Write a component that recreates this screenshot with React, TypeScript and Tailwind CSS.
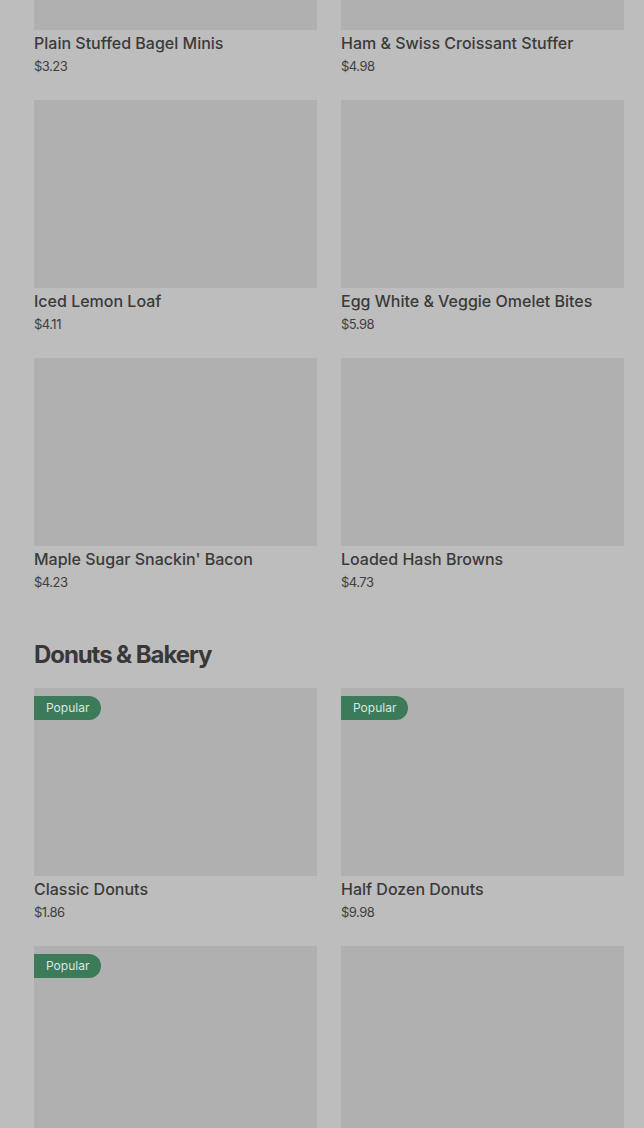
type Item = {
  name: string
  price: string
  popular?: boolean
}

const breakfast: Item[] = [
  { name: 'Plain Stuffed Bagel Minis', price: '$3.23' },
  { name: 'Ham & Swiss Croissant Stuffer', price: '$4.98' },
  { name: 'Iced Lemon Loaf', price: '$4.11' },
  { name: 'Egg White & Veggie Omelet Bites', price: '$5.98' },
  { name: "Maple Sugar Snackin' Bacon", price: '$4.23' },
  { name: 'Loaded Hash Browns', price: '$4.73' },
]

const bakery: Item[] = [
  { name: 'Classic Donuts', price: '$1.86', popular: true },
  { name: 'Half Dozen Donuts', price: '$9.98', popular: true },
  { name: 'Dozen Donuts', price: '$17.48', popular: true },
  { name: 'Munchkins Donut Hole Treats', price: '$4.98' },
]

function ItemCard({ item }: { item: Item }) {
  return (
    <div className="flex flex-col">
      <div className="relative h-[188px] w-full bg-[#b0b0b0]">
        {item.popular && (
          <span className="absolute top-2 left-0 flex h-6 items-center rounded-r-full bg-[#3b7b59] pr-3 pl-3 text-xs text-[#dbe7e0]">
            Popular
          </span>
        )}
      </div>
      <p className="mt-[3px] text-base leading-5 font-medium text-[#3a3a3a]">{item.name}</p>
      <p className="mt-[3px] text-[13px] leading-5 tracking-[-0.04em] text-[#404040]">
        {item.price}
      </p>
    </div>
  )
}

function Grid({ items }: { items: Item[] }) {
  return (
    <div className="grid grid-cols-2 gap-x-6 gap-y-6">
      {items.map((item) => (
        <ItemCard key={item.name} item={item} />
      ))}
    </div>
  )
}

export default function App() {
  return (
    <div
      className="h-screen overflow-hidden bg-[#bdbdbd] pr-5 pl-[34px]"
      style={{ fontFamily: 'Inter, "Noto Sans", sans-serif' }}
    >
      <div className="-mt-[158px]">
        <Grid items={breakfast} />
        <h2 className="mt-[47px] mb-[17px] text-2xl leading-8 font-bold tracking-[-0.045em] text-[#383838]">
          Donuts &amp; Bakery
        </h2>
        <Grid items={bakery} />
      </div>
    </div>
  )
}
